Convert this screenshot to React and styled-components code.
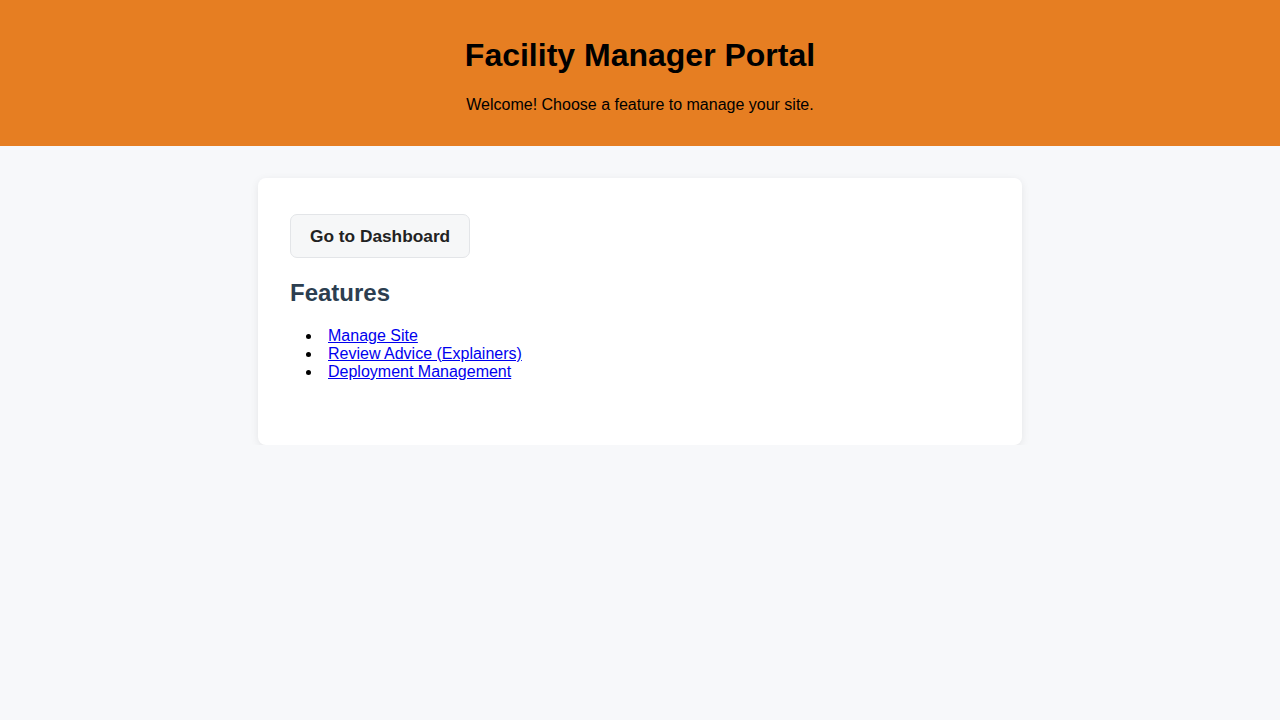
import styled, { createGlobalStyle } from 'styled-components';

const Global = createGlobalStyle`
    body {
        margin: 0;
        background: #F7F8FA;
        font-family: "Liberation Sans", Arial, sans-serif;
    }
`;

const features = [
    'Manage Site',
    'Review Advice (Explainers)',
    'Deployment Management',
];

export default function App() {
    return (
        <>
            <Global />
            <Header>
                <Title>Facility Manager Portal</Title>
                <Subtitle>Welcome! Choose a feature to manage your site.</Subtitle>
            </Header>
            <Main>
                <Card>
                    <Botao>Go to Dashboard</Botao>
                    <H2>Features</H2>
                    <Lista>
                        {features.map(f => (
                            <Item key={f}><Link href="#">{f}</Link></Item>
                        ))}
                    </Lista>
                </Card>
            </Main>
        </>
    );
}

const Header = styled.header`
    padding: 16px;
    text-align: center;
    color: #000000;
    background: #E67E22;
`;

const Title = styled.h1`
    margin: 21.44px 0;
    font-size: 32px;
`;

const Subtitle = styled.p`
    margin: 16px 0;
    font-size: 16px;
`;

const Main = styled.main`
    padding-top: 32px;
`;

const Card = styled.section`
    max-width: 700px;
    margin: 0 auto;
    padding: 36px 32px 38px;
    border-radius: 8px;
    background: #FFFFFF;
    box-shadow: 0 2px 8px rgba(0, 0, 0, 0.08);
`;

const Botao = styled.button`
    display: block;
    height: 44px;
    padding: 2px 19px 0;
    font-family: inherit;
    font-size: 17.3px;
    font-weight: bold;
    border-radius: 7px;
    color: #222222;
    border: 1px solid #E3E5E8;
    background: #F6F7F8;

    :hover {
        cursor: pointer;
    }
`;

const H2 = styled.h2`
    margin: 21px 0 20px;
    font-size: 24px;
    color: #2C3E50;
`;

const Lista = styled.ul`
    margin: 0 0 26px;
    padding-left: 32px;
    font-size: 16px;
`;

const Item = styled.li`
    padding-left: 6px;
`;

const Link = styled.a`
    color: #0000EE;
`;
